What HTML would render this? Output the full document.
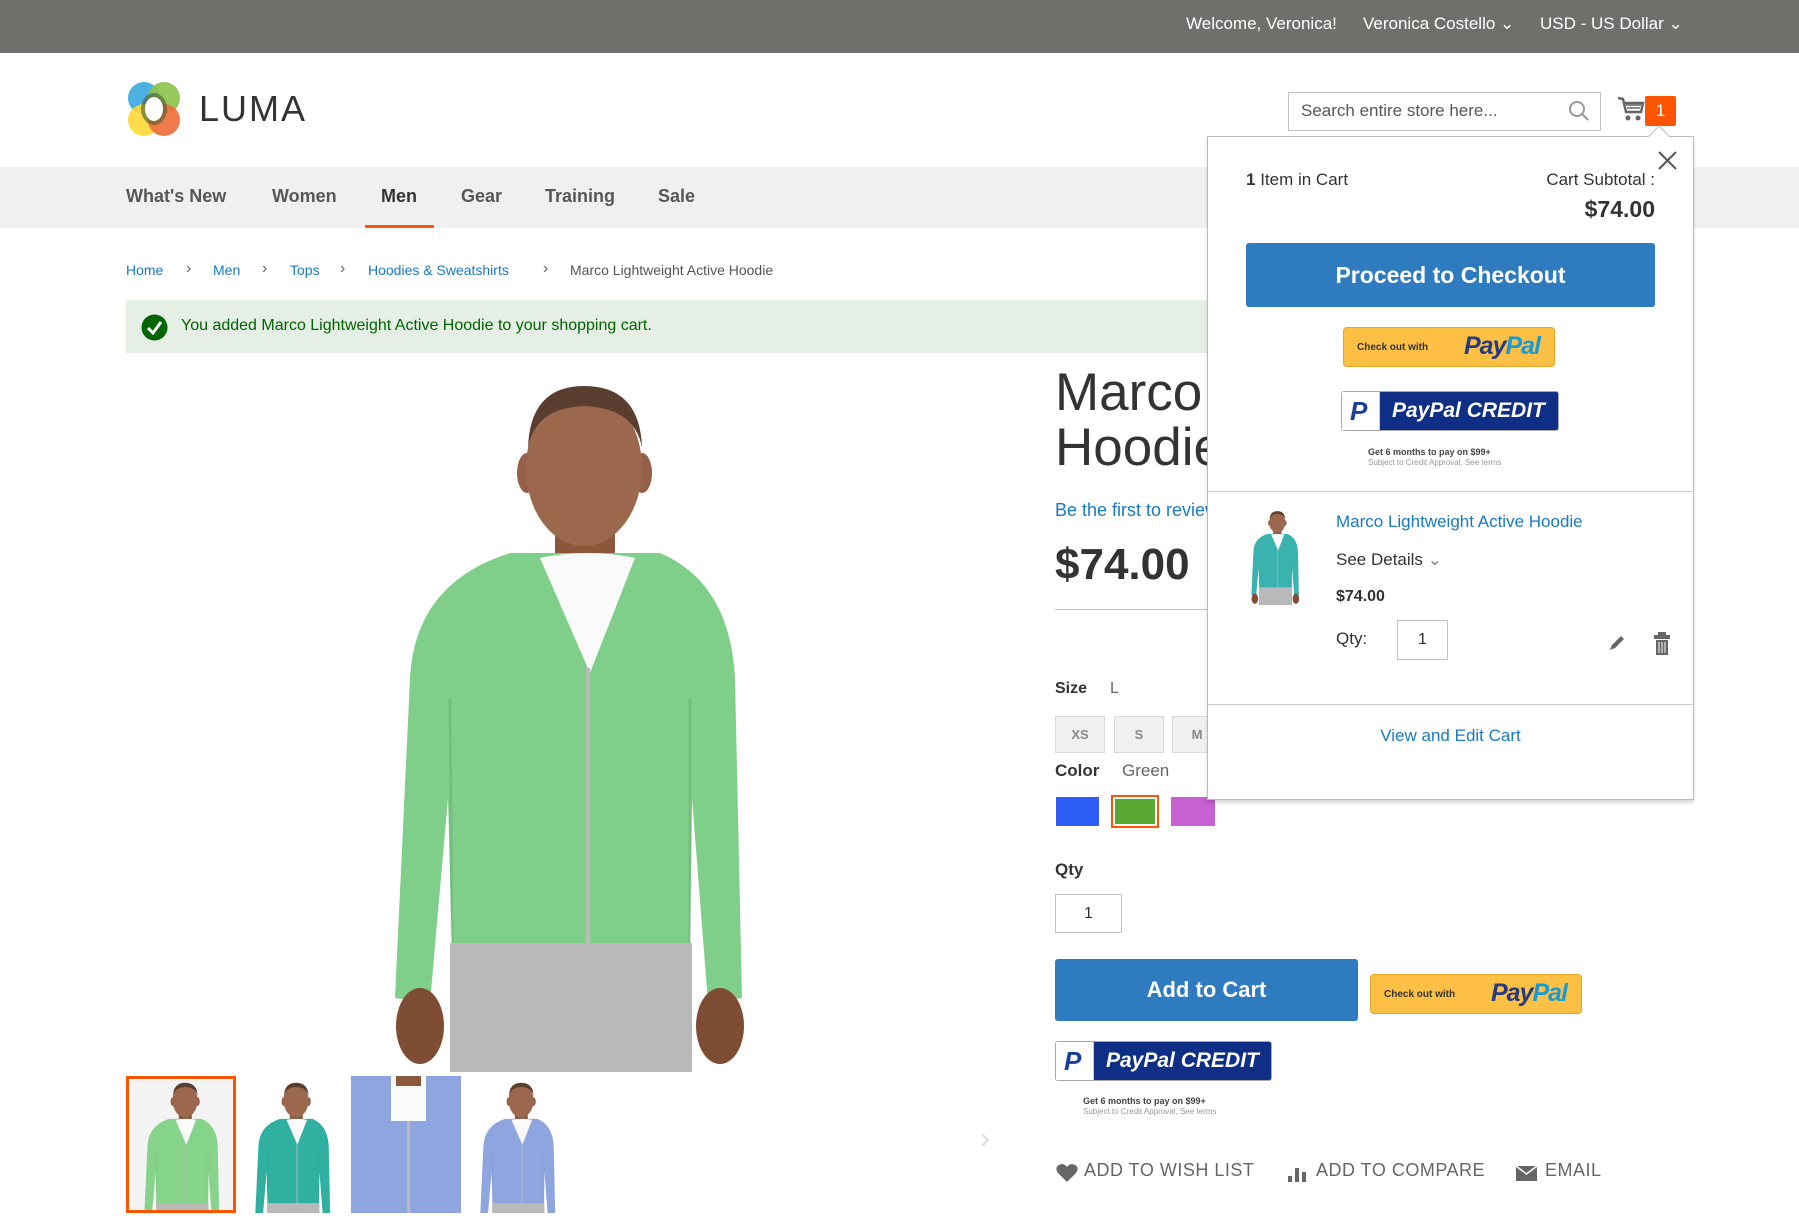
<!DOCTYPE html>
<html><head><meta charset="utf-8">
<style>
*{margin:0;padding:0;box-sizing:border-box}
body{width:1799px;height:1227px;position:relative;overflow:hidden;background:#fff;font-family:"Liberation Sans",sans-serif;color:#333}
.a{position:absolute;white-space:nowrap}
.blue{color:#1979c3}
.btn{position:absolute;background:#2f7bbf;color:#fff;border-radius:3px;text-align:center;font-weight:bold}
.pp{position:absolute;background:#fdbf44;border:1px solid #e5a524;border-radius:4px}
.pp span{position:absolute;font-size:10px;font-weight:bold;color:#333;top:14px;left:13px}
.pp b{position:absolute;font-style:italic;font-size:25px;color:#253b80;top:4px;right:14px;letter-spacing:-1px}
.pp b i{color:#179bd7}
.pc{position:absolute;background:#0e2f85;border:1px solid #aaa;border-radius:3px}
.pc .w{position:absolute;left:0;top:0;bottom:0;width:38px;background:#fff;border-right:1px solid #ccc}
.pc b{position:absolute;left:50px;top:7px;font-style:italic;color:#fff;font-size:21px}
.sw{position:absolute;background:#f0f0f0;border:1px solid #dadada;font-size:13px;font-weight:bold;color:#888;text-align:center;line-height:35px}
</style></head><body>
<svg width="0" height="0" style="position:absolute">
<defs>
<symbol id="man" viewBox="0 0 355 694">
<rect x="165" y="140" width="60" height="70" fill="#8a573c"/>
<ellipse cx="28" cy="112" rx="0" ry="0"/>
<ellipse cx="137" cy="95" rx="10" ry="20" fill="#94604a"/>
<ellipse cx="252" cy="95" rx="10" ry="20" fill="#94604a"/>
<ellipse cx="194" cy="90" rx="58" ry="78" fill="#9c684d"/>
<path d="M138 70 Q140 8 194 8 Q250 8 252 70 Q245 30 194 28 Q145 30 138 70Z" fill="#5a3e30"/>
<path d="M20 300 Q25 205 120 175 L270 175 Q340 205 345 300 L352 620 L318 625 L302 420 L300 575 L62 575 L58 420 L40 625 L5 620Z" fill="currentColor"/>
<path d="M60 320 L62 570 M300 320 L300 570" stroke="#000" stroke-opacity=".08" stroke-width="3"/>
<path d="M150 180 Q197 170 245 180 L200 295Z" fill="#fafafa"/>
<line x1="198" y1="290" x2="198" y2="575" stroke="#bbb" stroke-width="4"/>
<rect x="60" y="565" width="242" height="129" fill="#b9b9b9"/>
<ellipse cx="30" cy="648" rx="24" ry="38" fill="#7f4d33"/>
<ellipse cx="330" cy="648" rx="24" ry="38" fill="#7f4d33"/>
</symbol>
</defs></svg>

<!-- top bar -->
<div class="a" style="left:0;top:0;width:1799px;height:53px;background:#6e706c"></div>
<div class="a" style="left:1186px;top:14px;color:#fff;font-size:17px">Welcome, Veronica!</div>
<div class="a" style="left:1363px;top:14px;color:#fff;font-size:17px">Veronica Costello &#8964;</div>
<div class="a" style="left:1540px;top:14px;color:#fff;font-size:17px">USD - US Dollar &#8964;</div>

<!-- logo -->
<svg class="a" style="left:126px;top:80px" width="56" height="58" viewBox="0 0 56 58">
<circle cx="18" cy="18" r="16" fill="#3aa7e0" opacity=".9"/>
<circle cx="38" cy="18" r="16" fill="#8bc34a" opacity=".9"/>
<circle cx="18" cy="40" r="16" fill="#fdd835" opacity=".9"/>
<circle cx="38" cy="40" r="16" fill="#f06b3a" opacity=".9"/>
<ellipse cx="28" cy="29" rx="13" ry="16" fill="#4a5c2e" opacity=".6"/>
<ellipse cx="28" cy="29" rx="9" ry="12" fill="#fff"/>
</svg>
<div class="a" style="left:199px;top:88px;font-size:36px;letter-spacing:2px;color:#333">LUMA</div>

<!-- search -->
<div class="a" style="left:1288px;top:92px;width:313px;height:39px;border:1px solid #c2c2c2"></div>
<div class="a" style="left:1301px;top:101px;font-size:17px;color:#575757">Search entire store here...</div>
<svg class="a" style="left:1568px;top:100px" width="22" height="22" viewBox="0 0 22 22"><circle cx="9" cy="9" r="7" fill="none" stroke="#999" stroke-width="2"/><line x1="14" y1="14" x2="20" y2="20" stroke="#999" stroke-width="2"/></svg>
<svg class="a" style="left:1617px;top:96px" width="28" height="28" viewBox="0 0 28 28"><path d="M1 2 L6 3 L9 16 L24 16 L26 7 L7 7" fill="none" stroke="#666" stroke-width="2.5"/><path d="M9 9h15M10 12h13" stroke="#666" stroke-width="1.5"/><circle cx="11" cy="22" r="2.5" fill="#666"/><circle cx="21" cy="22" r="2.5" fill="#666"/></svg>
<div class="a" style="left:1645px;top:96px;width:31px;height:30px;background:#ff5501;border-radius:2px;color:#fff;font-size:17px;text-align:center;line-height:30px">1</div>

<!-- nav -->
<div class="a" style="left:0;top:167px;width:1799px;height:61px;background:#f0f0f0"></div>
<div class="a" style="left:126px;top:186px;font-size:18px;font-weight:bold;color:#575757">What's New</div>
<div class="a" style="left:272px;top:186px;font-size:18px;font-weight:bold;color:#575757">Women</div>
<div class="a" style="left:381px;top:186px;font-size:18px;font-weight:bold;color:#333">Men</div>
<div class="a" style="left:461px;top:186px;font-size:18px;font-weight:bold;color:#575757">Gear</div>
<div class="a" style="left:545px;top:186px;font-size:18px;font-weight:bold;color:#575757">Training</div>
<div class="a" style="left:658px;top:186px;font-size:18px;font-weight:bold;color:#575757">Sale</div>
<div class="a" style="left:365px;top:225px;width:69px;height:3px;background:#ff5501"></div>

<!-- breadcrumbs -->
<div class="a blue" style="left:126px;top:262px;font-size:14px">Home</div>
<div class="a" style="left:186px;top:260px;font-size:16px;color:#666">›</div>
<div class="a blue" style="left:213px;top:262px;font-size:14px">Men</div>
<div class="a" style="left:262px;top:260px;font-size:16px;color:#666">›</div>
<div class="a blue" style="left:290px;top:262px;font-size:14px">Tops</div>
<div class="a" style="left:340px;top:260px;font-size:16px;color:#666">›</div>
<div class="a blue" style="left:368px;top:262px;font-size:14px">Hoodies &amp; Sweatshirts</div>
<div class="a" style="left:543px;top:260px;font-size:16px;color:#666">›</div>
<div class="a" style="left:570px;top:262px;font-size:14px;color:#555">Marco Lightweight Active Hoodie</div>

<!-- message -->
<div class="a" style="left:126px;top:300px;width:1100px;height:53px;background:#e5efe5"></div>
<svg class="a" style="left:141px;top:314px" width="27" height="27" viewBox="0 0 27 27"><circle cx="13.5" cy="13.5" r="13" fill="#006400"/><path d="M7 14 L12 19 L20 8" fill="none" stroke="#fff" stroke-width="3"/></svg>
<div class="a" style="left:181px;top:317px;font-size:16px;color:#006400">You added Marco Lightweight Active Hoodie to your shopping cart.</div>

<!-- main image -->
<svg class="a" style="left:390px;top:378px;color:#7fcf8a" width="355" height="694"><use href="#man"/></svg>

<!-- thumbs -->
<div class="a" style="left:126px;top:1076px;width:110px;height:137px;border:3px solid #ff5501;background:#f4f4f4;overflow:hidden"><svg style="position:absolute;left:10px;top:2px;color:#86d38c" width="85" height="150"><use href="#man"/></svg></div>
<div class="a" style="left:238px;top:1076px;width:110px;height:137px;overflow:hidden"><svg style="position:absolute;left:12px;top:5px;color:#2fb0a0" width="85" height="150"><use href="#man"/></svg></div>
<div class="a" style="left:351px;top:1076px;width:110px;height:137px;background:#8ea5e0;overflow:hidden">
<div style="position:absolute;left:40px;top:0;width:35px;height:45px;background:#fafafa"></div>
<div style="position:absolute;left:45px;top:0;width:25px;height:10px;background:#8b5a3c"></div>
<div style="position:absolute;left:56px;top:45px;width:3px;height:92px;background:#bbb"></div></div>
<div class="a" style="left:463px;top:1076px;width:110px;height:137px;overflow:hidden"><svg style="position:absolute;left:12px;top:5px;color:#8ea5e0" width="85" height="150"><use href="#man"/></svg></div>
<div class="a" style="left:980px;top:1122px;font-size:30px;color:#ddd">›</div>

<!-- product info -->
<div class="a" style="left:1055px;top:362px;font-size:53px;font-weight:300;color:#333">Marco</div>
<div class="a" style="left:1055px;top:417px;font-size:53px;font-weight:300;color:#333">Hoodie</div>
<div class="a blue" style="left:1055px;top:500px;font-size:18px">Be the first to review</div>
<div class="a" style="left:1055px;top:540px;font-size:44px;font-weight:bold;color:#333">$74.00</div>
<div class="a" style="left:1055px;top:609px;width:160px;height:1px;background:#c1c1c1"></div>
<div class="a" style="left:1055px;top:680px;font-size:16px;font-weight:bold">Size</div>
<div class="a" style="left:1110px;top:680px;font-size:16px;color:#666">L</div>
<div class="sw" style="left:1055px;top:716px;width:50px;height:37px">XS</div>
<div class="sw" style="left:1114px;top:716px;width:50px;height:37px">S</div>
<div class="sw" style="left:1172px;top:716px;width:50px;height:37px">M</div>
<div class="a" style="left:1055px;top:761px;font-size:17px;font-weight:bold">Color</div>
<div class="a" style="left:1122px;top:761px;font-size:17px;color:#666">Green</div>
<div class="a" style="left:1056px;top:797px;width:43px;height:29px;background:#2d5cf6"></div>
<div class="a" style="left:1111px;top:795px;width:48px;height:33px;border:2px solid #ff5501;padding:2px"><div style="width:100%;height:100%;background:#59a733"></div></div>
<div class="a" style="left:1171px;top:797px;width:44px;height:29px;background:#c85fd3"></div>
<div class="a" style="left:1055px;top:860px;font-size:17px;font-weight:bold">Qty</div>
<div class="a" style="left:1055px;top:894px;width:67px;height:39px;border:1px solid #c2c2c2;text-align:center;line-height:37px;font-size:16px">1</div>
<div class="btn" style="left:1055px;top:959px;width:303px;height:62px;line-height:62px;font-size:22px">Add to Cart</div>
<div class="pp" style="left:1370px;top:974px;width:212px;height:40px"><span>Check out with</span><b>Pay<i>Pal</i></b></div>
<div class="pc" style="left:1055px;top:1041px;width:217px;height:40px"><div class="w"><b style="position:absolute;left:8px;top:4px;color:#1a3f99;font-size:26px;font-style:italic">P</b></div><b>PayPal CREDIT</b></div>
<div class="a" style="left:1083px;top:1096px;font-size:9px;font-weight:bold;color:#444">Get 6 months to pay on $99+</div>
<div class="a" style="left:1083px;top:1107px;font-size:8px;color:#999">Subject to Credit Approval, See terms</div>

<!-- actions -->
<svg class="a" style="left:1056px;top:1163px" width="22" height="20" viewBox="0 0 22 20"><path d="M11 19 L2 10 Q-2 4 4 1.5 Q8 0 11 4 Q14 0 18 1.5 Q24 4 20 10Z" fill="#666"/></svg>
<div class="a" style="left:1084px;top:1160px;font-size:18px;color:#666;letter-spacing:.5px">ADD TO WISH LIST</div>
<svg class="a" style="left:1287px;top:1163px" width="22" height="20"><rect x="1" y="13" width="4" height="6" fill="#666"/><rect x="8" y="5" width="4" height="14" fill="#666"/><rect x="15" y="9" width="4" height="10" fill="#666"/></svg>
<div class="a" style="left:1316px;top:1160px;font-size:18px;color:#666;letter-spacing:.5px">ADD TO COMPARE</div>
<svg class="a" style="left:1516px;top:1166px" width="22" height="16"><rect x="0" y="0" width="21" height="15" fill="#666"/><path d="M0 0 L10.5 8 L21 0" fill="none" stroke="#fff" stroke-width="1.5"/></svg>
<div class="a" style="left:1545px;top:1160px;font-size:18px;color:#666;letter-spacing:.5px">EMAIL</div>

<!-- minicart dropdown -->
<div class="a" style="left:1207px;top:136px;width:487px;height:664px;background:#fff;border:1px solid #bbb;box-shadow:0 3px 3px rgba(0,0,0,.15)"></div>
<svg class="a" style="left:1648px;top:125px" width="22" height="13"><path d="M0 12 L11 1 L22 12" fill="#fff" stroke="#bbb"/></svg>
<svg class="a" style="left:1658px;top:151px" width="19" height="19"><path d="M1 1 L18 18 M18 1 L1 18" stroke="#555" stroke-width="2"/></svg>
<div class="a" style="left:1246px;top:170px;font-size:17px;color:#333"><b>1</b> Item in Cart</div>
<div class="a" style="right:144px;top:170px;font-size:17px;color:#333">Cart Subtotal :</div>
<div class="a" style="right:144px;top:196px;font-size:23px;font-weight:bold;color:#333">$74.00</div>
<div class="btn" style="left:1246px;top:243px;width:409px;height:64px;line-height:64px;font-size:23px">Proceed to Checkout</div>
<div class="pp" style="left:1343px;top:327px;width:212px;height:40px"><span>Check out with</span><b>Pay<i>Pal</i></b></div>
<div class="pc" style="left:1341px;top:391px;width:218px;height:40px"><div class="w"><b style="position:absolute;left:8px;top:4px;color:#1a3f99;font-size:26px;font-style:italic">P</b></div><b>PayPal CREDIT</b></div>
<div class="a" style="left:1368px;top:447px;font-size:9px;font-weight:bold;color:#444">Get 6 months to pay on $99+</div>
<div class="a" style="left:1368px;top:458px;font-size:8px;color:#999">Subject to Credit Approval, See terms</div>
<div class="a" style="left:1208px;top:491px;width:485px;height:1px;background:#ccc"></div>
<svg class="a" style="left:1245px;top:510px;color:#3ab3b0" width="60" height="95"><use href="#man"/></svg>
<div class="a blue" style="left:1336px;top:512px;font-size:17px">Marco Lightweight Active Hoodie</div>
<div class="a" style="left:1336px;top:550px;font-size:17px;color:#333">See Details <span style="color:#888">&#8964;</span></div>
<div class="a" style="left:1336px;top:588px;font-size:16px;font-weight:bold;color:#333">$74.00</div>
<div class="a" style="left:1336px;top:629px;font-size:17px;color:#333">Qty:</div>
<div class="a" style="left:1397px;top:620px;width:51px;height:40px;border:1px solid #c2c2c2;text-align:center;line-height:38px;font-size:16px">1</div>
<svg class="a" style="left:1608px;top:634px" width="18" height="18"><path d="M2 16 L4 11 L13 2 L16 5 L7 14Z" fill="#666"/></svg>
<svg class="a" style="left:1653px;top:632px" width="18" height="24"><rect x="5" y="0" width="8" height="3" fill="#666"/><rect x="1" y="3" width="16" height="4" fill="#666"/><rect x="3" y="8" width="12" height="15" fill="#666"/><path d="M6 10v11M9 10v11M12 10v11" stroke="#fff" stroke-width="1"/></svg>
<div class="a" style="left:1208px;top:704px;width:485px;height:1px;background:#ccc"></div>
<div class="a blue" style="left:1208px;top:726px;width:485px;text-align:center;font-size:17px">View and Edit Cart</div>
</body></html>
